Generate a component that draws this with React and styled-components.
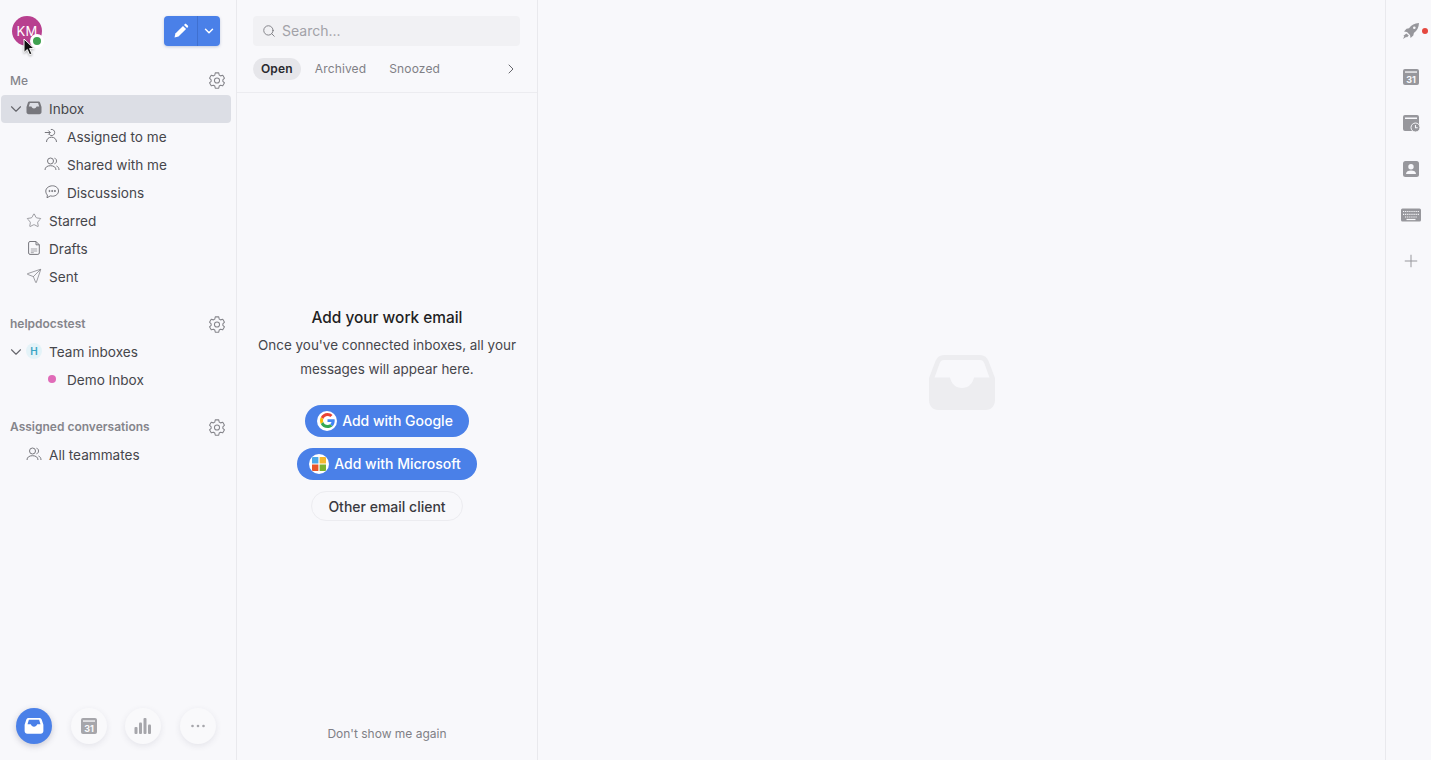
import React from "react";
import styled, { createGlobalStyle } from "styled-components";
import { ChevronDown, ChevronRight, Search, Star, Send, Plus } from "lucide-react";

const Global = createGlobalStyle`
  html, body { margin: 0; padding: 0; height: 100%; background: #f8f8fb; }
  #root { height: 100%; }
  * { box-sizing: border-box; }
  body { font-family: Inter, "Liberation Sans", sans-serif; color: #3a3a3f; overflow: hidden; }
`;

const Page = styled.div`
  display: flex; width: 1431px; height: 760px; position: relative; background: #f8f8fb;
`;
const Sidebar = styled.aside`
  width: 237px; flex: none; border-right: 1px solid #e9e9ed; display: flex; flex-direction: column; height: 100%;
`;
const TopBar = styled.div`
  height: 66px; flex: none; display: flex; align-items: flex-start; justify-content: space-between;
  padding: 16px 16px 0 12px;
`;
const Avatar = styled.div`
  width: 30px; height: 30px; border-radius: 50%; background: #b8408f; color: #fff; font-size: 13px; font-weight: 400;
  display: flex; align-items: center; justify-content: center; position: relative; letter-spacing: .2px;
`;
const Status = styled.span`
  position: absolute; left: 18px; top: 18px; width: 14px; height: 14px; border-radius: 50%;
  background: #3fa14f; border: 3px solid #fff;
`;
const Compose = styled.div`
  display: flex; width: 56px; height: 30px; border-radius: 4px; overflow: hidden; background: #4a80e8;
  box-shadow: 0 1px 3px rgba(40,70,140,.25);
`;
const ComposeMain = styled.div`
  width: 34px; display: flex; align-items: center; justify-content: center; border-right: 1px solid #3f70d0;
`;
const ComposeCaret = styled.div`
  flex: 1; display: flex; align-items: center; justify-content: center; color: #fff;
`;
const SectionHead = styled.div`
  height: 28px; display: flex; align-items: center; justify-content: space-between; padding: 0 10px 0 10px;
  margin-top: ${p => p.$gap || 0}px; margin-bottom: ${p => p.$after || 0}px;
  font-size: 12px; font-weight: ${p => p.$bold ? 600 : 500}; color: #85858b;
`;
const HeadLabel = styled.span`
  margin-top: ${p => p.$raise ? -2 : 0}px;
`;
const Row = styled.div`
  height: 28px; margin: 0 5px 0 1px; display: flex; align-items: center; position: relative; border-radius: 4px;
  padding-left: ${p => p.$depth ? 66 : 48}px; padding-bottom: 1px; font-size: 13.6px; color: #46464b;
  background: ${p => p.$active ? "#dcdee5" : "transparent"};
`;
const RowIcon = styled.span`
  position: absolute; left: ${p => p.$depth ? 43 : 25}px; top: 5px; width: 16px; height: 16px;
  display: flex; align-items: center; justify-content: center; color: #6f6f75;
`;
const Caret = styled.span`
  position: absolute; left: 6px; top: 5px; display: flex; color: #66666c;
`;
const HBadge = styled.span`
  width: 16px; height: 16px; border-radius: 50%; background: #e4f3f8; color: #38a4c4; font-size: 10px; font-weight: 600;
  display: flex; align-items: center; justify-content: center;
`;
const Dot = styled.span`
  width: 8px; height: 8px; border-radius: 50%; background: #e06bb8;
`;
const Spacer = styled.div`flex: 1;`;
const BottomNav = styled.nav`
  display: flex; gap: 18.5px; padding: 0 0 16px 16px;
`;
const Round = styled.div`
  width: 36px; height: 36px; border-radius: 50%; display: flex; align-items: center; justify-content: center;
  background: ${p => p.$on ? "#4a80e8" : "#f9f9fb"};
  box-shadow: 0 2px 6px rgba(60,60,90,${p => p.$on ? ".25" : ".1"});
`;
const ListPanel = styled.section`
  width: 301px; flex: none; border-right: 1px solid #e9e9ed; display: flex; flex-direction: column; height: 100%;
`;
const PanelHead = styled.div`
  height: 93px; flex: none; border-bottom: 1px solid #ececf0; padding: 16px 17px 0 16px;
`;
const SearchBox = styled.div`
  height: 30px; width: 267px; background: #f1f1f4; border-radius: 4px; display: flex; align-items: center; gap: 6px;
  padding: 0 0 1px 9px; font-size: 14px; color: #a2a2a8;
`;
const Tabs = styled.div`
  display: flex; align-items: center; margin-top: 12px; height: 22px; font-size: 12px; letter-spacing: .15px;
`;
const Tab = styled.span`
  padding: 0 8px 1px; height: 22px; display: inline-flex; align-items: center; border-radius: 11px;
  margin-right: ${p => p.$mr}px; color: ${p => p.$on ? "#2a2a2e" : "#808086"}; font-weight: ${p => p.$on ? 600 : 400};
  background: ${p => p.$on ? "#e6e6ea" : "transparent"};
`;
const TabArrow = styled.span`
  margin-left: auto; margin-right: 1px; display: flex; color: #66666c;
`;
const Empty = styled.div`
  flex: 1; display: flex; flex-direction: column; align-items: center; padding: 213px 16px 0;
`;
const Title = styled.h2`
  margin: 0; font-size: 15.4px; line-height: 24px; font-weight: 500; color: #1f1f23;
`;
const Body = styled.p`
  margin: 3px 0 24px; text-align: center; font-size: 13.45px; line-height: 24px; color: #46464b; white-space: nowrap;
`;
const Cta = styled.div`
  height: 32px; border-radius: 16px; background: #4a80e8; color: #fff; font-size: 14px; font-weight: 500;
  display: flex; align-items: center; gap: 5px; padding: 0 16px 1px 12px; margin-bottom: 11px;
`;
const LogoDisc = styled.span`
  width: 20px; height: 20px; border-radius: 50%; background: #fff; display: flex; align-items: center; justify-content: center;
`;
const Ghost = styled.div`
  width: 152px; height: 30px; border-radius: 15px; border: 1px solid #ececf0; color: #3a3a3f; font-size: 14px; font-weight: 500;
  display: flex; align-items: center; justify-content: center;
`;
const Foot = styled.div`
  height: 52px; text-align: center; font-size: 12px; color: #808086; padding-top: 18px;
`;
const Main = styled.main`
  flex: 1; display: flex; align-items: center; justify-content: center; padding-top: 4px;
`;
const Rail = styled.aside`
  width: 46px; flex: none; border-left: 1px solid #e9e9ed; display: flex; flex-direction: column; align-items: center;
  padding: 8px 0 0 4px;
`;
const RailItem = styled.div`
  height: 46px; width: 100%; display: flex; align-items: center; justify-content: center; position: relative;
`;
const RedDot = styled.span`
  position: absolute; left: 32px; top: 20px; width: 6px; height: 6px; border-radius: 50%; background: #e5483f;
`;
const CursorMark = styled.svg`
  position: absolute; left: 23px; top: 38px; filter: drop-shadow(0 1px 1px rgba(0,0,0,.3));
`;

const Gear = () => (
  <svg width="18" height="18" viewBox="0 0 24 24" fill="none" stroke="#85858b" strokeWidth="1.4" strokeLinejoin="round">
    <path d="M9.700 2.500h4.600l.7 3 1.700 1 3-.9 2.300 4-2.200 2.100v2l2.200 2.100-2.300 4-3-.9-1.700 1-.7 3H9.700l-.7-3-1.700-1-3 .9-2.300-4 2.200-2.100v-2L2 9.600l2.300-4 3 .9 1.700-1z" />
    <circle cx="12" cy="12.600" r="3.400" />
  </svg>
);
const InboxIcon = ({ size = 16, color = "#77777d", hole = "#dcdee5" }) => (
  <svg width={size} height={size} viewBox="0 0 16 16">
    <path d="M3.800 1.500h8.400c1 0 1.700.5 2 1.400l1.300 4V12c0 1.300-.9 2.200-2.200 2.200H2.700C1.400 14.200.5 13.300.5 12V6.900l1.300-4c.3-.9 1-1.400 2-1.400z" fill={color} />
    <path d="M3.900 3h8.200l1.100 3.500h-2.600c-.5 1.300-1.400 2-2.600 2s-2.100-.7-2.600-2H2.800z" fill={hole} />
  </svg>
);
const Assigned = () => (
  <svg width="16" height="16" viewBox="0 0 16 16" fill="none" stroke="#77777d" strokeWidth="1">
    <path d="M6.800 1.500a3.100 3.100 0 1 1 0 6 3.100 3.100 0 0 1-1.600-1.300" />
    <path d="M.8 4.500h5.500M4.300 2.500l2 2-2 2" />
    <path d="M2.500 14c0-3 2.200-4.800 5-4.800s5 1.800 5 4.800" />
  </svg>
);
const Users = () => (
  <svg width="16" height="16" viewBox="0 0 16 16" fill="none" stroke="#77777d" strokeWidth="1">
    <circle cx="6.500" cy="5" r="3" />
    <path d="M10.500 2.200c1.500.4 2 1.500 2 2.800s-.6 2.400-2 2.800" />
    <path d="M1 14c0-2.800 2.200-4.300 5.500-4.300S12 11.200 12 14" />
    <path d="M12.500 10c1.500.5 2.500 2 2.500 4" />
  </svg>
);
const Chat = () => (
  <svg width="16" height="16" viewBox="0 0 16 16" fill="none" stroke="#77777d" strokeWidth="1">
    <path d="M8.500 1.800c3.400 0 6 2.300 6 5.200s-2.600 5.200-6 5.200c-.8 0-1.500-.1-2.200-.3L3 13.800l.4-2.800C2.200 10 1.800 8.500 1.800 7c0-2.900 3.200-5.200 6.700-5.200z" />
    <circle cx="5.500" cy="7" r=".6" fill="#77777d" />
    <circle cx="8.200" cy="7" r=".6" fill="#77777d" />
    <circle cx="10.900" cy="7" r=".6" fill="#77777d" />
  </svg>
);
const Draft = () => (
  <svg width="16" height="16" viewBox="0 0 16 16" fill="none" stroke="#77777d" strokeWidth="1">
    <path d="M4 1.500h6l3.300 3.300v8.200c0 .8-.6 1.400-1.400 1.400H4c-.8 0-1.400-.6-1.400-1.400V2.900c0-.8.6-1.400 1.400-1.400z" />
    <path d="M10 1.500v3.300h3.300" />
    <path d="M4.800 9h6.400M4.800 11h6.400M4.800 12.700h3" stroke="#a5a5aa" />
  </svg>
);
const Pencil = () => (
  <svg width="16" height="16" viewBox="0 0 16 16" fill="#fff">
    <path d="M1.500 14.500l.9-4L10 2.900l3.100 3.100-7.600 7.600z" />
    <path d="M11 1.900l.7-.7c.5-.5 1.200-.5 1.700 0l1.400 1.400c.5.5.5 1.200 0 1.700l-.7.700z" />
  </svg>
);
const Calendar = ({ color = "#a6a6ab", inner = "#f9f9fb" }) => (
  <svg width="18" height="18" viewBox="0 0 18 18">
    <rect x="1" y="1" width="16" height="16" rx="2" fill={color} />
    <rect x="3" y="3.400" width="12" height="1.300" fill={inner} />
    <text x="9" y="14.500" textAnchor="middle" fontSize="9" fontWeight="700" fontFamily="Inter, sans-serif" fill={inner}>31</text>
  </svg>
);
const CalClock = () => (
  <svg width="18" height="18" viewBox="0 0 18 18">
    <path d="M3 1h12a2 2 0 0 1 2 2v8h-6v6H3a2 2 0 0 1-2-2V3a2 2 0 0 1 2-2z" fill="#97979c" />
    <rect x="3" y="3.500" width="12" height="1.500" fill="#f8f8fb" />
    <circle cx="13.500" cy="13.500" r="4.500" fill="#97979c" stroke="#f8f8fb" strokeWidth="1" />
    <path d="M13.500 11v2.700h2.200" fill="none" stroke="#f8f8fb" strokeWidth="1.100" />
  </svg>
);
const Contact = () => (
  <svg width="18" height="18" viewBox="0 0 18 18">
    <rect x="1" y="1" width="16" height="16" rx="2.500" fill="#97979c" />
    <circle cx="9" cy="6.800" r="2.700" fill="#f8f8fb" />
    <path d="M4 14c0-2.500 2.200-3.600 5-3.600s5 1.100 5 3.600z" fill="#f8f8fb" />
  </svg>
);
const Keyboard = () => (
  <svg width="20" height="14" viewBox="0 0 20 14">
    <rect x="0" y="0.500" width="20" height="13" rx="1.500" fill="#97979c" />
    <path d="M2 3.500h16M2 6.300h16" stroke="#f8f8fb" strokeWidth="1.200" strokeDasharray="1.200 .9" />
    <path d="M4 9h12" stroke="#f8f8fb" strokeWidth="1.200" strokeDasharray="1.200 .9" />
    <path d="M5.500 11.500h9" stroke="#f8f8fb" strokeWidth="1.200" />
  </svg>
);
const Rocket = () => (
  <svg width="18" height="18" viewBox="0 0 18 18" fill="#97979c">
    <path d="M17 1c-4.500.2-7.500 1.800-10 5.200L4.500 6.800 2 9.500l3 .6 3 3 .6 3 2.700-2.500.6-2.600C15.200 8.500 16.800 5.500 17 1z" />
    <path d="M4.300 11.500l-3 2.500 1 .3-1.300 2.700 3.500-2.200.3.800 2-2.200z" />
    <circle cx="12.300" cy="5.700" r="1.300" fill="#f8f8fb" />
  </svg>
);
const Bars = () => (
  <svg width="18" height="18" viewBox="0 0 18 18" fill="#a6a6ab">
    <rect x="0.500" y="10" width="3" height="7" rx="1" />
    <rect x="5" y="5.500" width="3" height="11.500" rx="1" />
    <rect x="9.500" y="1" width="3" height="16" rx="1" />
    <rect x="14" y="7.500" width="3" height="9.500" rx="1" />
  </svg>
);
const More = () => (
  <svg width="16" height="4" viewBox="0 0 16 4" fill="#a6a6ab">
    <circle cx="2.500" cy="2" r="1.300" /><circle cx="8" cy="2" r="1.300" /><circle cx="13.500" cy="2" r="1.300" />
  </svg>
);
const Google = () => (
  <svg width="15" height="15" viewBox="0 0 48 48">
    <path fill="#EA4335" d="M24 9.500c3.500 0 6.700 1.200 9.200 3.600l6.900-6.900C35.900 2.400 30.500 0 24 0 14.600 0 6.500 5.400 2.600 13.200l8 6.200C12.500 13.700 17.800 9.500 24 9.500z" />
    <path fill="#4285F4" d="M47 24.500c0-1.600-.1-3.100-.4-4.500H24v9h12.900c-.6 3-2.200 5.500-4.700 7.200l7.700 6c4.500-4.200 7.100-10.300 7.100-17.700z" />
    <path fill="#FBBC05" d="M10.500 28.600c-.5-1.400-.8-3-.8-4.600s.3-3.200.8-4.600l-8-6.200C.9 16.500 0 20.100 0 24s.9 7.500 2.600 10.800z" />
    <path fill="#34A853" d="M24 48c6.500 0 11.900-2.100 15.900-5.800l-7.700-6c-2.200 1.500-4.900 2.300-8.200 2.300-6.200 0-11.500-4.200-13.400-9.900l-8 6.200C6.500 42.600 14.600 48 24 48z" />
  </svg>
);
const Microsoft = () => (
  <svg width="14" height="14" viewBox="0 0 14 14">
    <path d="M1 0h5.400v6.400H0V1a1 1 0 0 1 1-1z" fill="#4aa8e8" />
    <path d="M7.600 0H13a1 1 0 0 1 1 1v5.400H7.600z" fill="#f5b82e" />
    <path d="M0 7.600h6.400V14H1a1 1 0 0 1-1-1z" fill="#e8562a" />
    <path d="M7.600 7.600H14V13a1 1 0 0 1-1 1H7.600z" fill="#7ab32f" />
  </svg>
);
const BigInbox = () => (
  <svg width="66" height="56" viewBox="0 0 66 56">
    <path d="M15 1h36c4 0 7 2 8.500 6L66 24v22c0 6-4 10-9 10H9c-5 0-9-4-9-10V24L6.500 7C8 3 11 1 15 1z" fill="#ededf0" />
    <path d="M15 6h36c2 0 3.500 1 4.200 3l5.300 14.500H45C43.500 30 39 34 33 34s-10.500-4-12-10.500H5.500L10.800 9C11.500 7 13 6 15 6z" fill="#f8f8fb" />
  </svg>
);
const Cursor = () => (
  <CursorMark width="13" height="18" viewBox="0 0 13 18">
    <path d="M1 1v13.500l3.300-3 2.300 5.300 2.300-1-2.300-5.200h4.500z" fill="#111" stroke="#fff" strokeWidth="1" />
  </CursorMark>
);

const chev = <ChevronDown size={18} strokeWidth={1.5} />;

export default function App() {
  return (
    <Page>
      <Global />
      <Sidebar>
        <TopBar>
          <Avatar>KM<Status /></Avatar>
          <Compose>
            <ComposeMain><Pencil /></ComposeMain>
            <ComposeCaret><ChevronDown size={14} strokeWidth={2.5} /></ComposeCaret>
          </Compose>
        </TopBar>
        <SectionHead $after={1}><HeadLabel>Me</HeadLabel><Gear /></SectionHead>
        <Row $active><Caret>{chev}</Caret><RowIcon><InboxIcon /></RowIcon>Inbox</Row>
        <Row $depth><RowIcon $depth><Assigned /></RowIcon>Assigned to me</Row>
        <Row $depth><RowIcon $depth><Users /></RowIcon>Shared with me</Row>
        <Row $depth><RowIcon $depth><Chat /></RowIcon>Discussions</Row>
        <Row><RowIcon><Star size={17} strokeWidth={1} /></RowIcon>Starred</Row>
        <Row><RowIcon><Draft /></RowIcon>Drafts</Row>
        <Row><RowIcon><Send size={16} strokeWidth={1} /></RowIcon>Sent</Row>
        <SectionHead $gap={19} $bold><HeadLabel $raise>helpdocstest</HeadLabel><Gear /></SectionHead>
        <Row><Caret>{chev}</Caret><RowIcon><HBadge>H</HBadge></RowIcon>Team inboxes</Row>
        <Row $depth><RowIcon $depth><Dot /></RowIcon>Demo Inbox</Row>
        <SectionHead $gap={19} $bold><HeadLabel $raise>Assigned conversations</HeadLabel><Gear /></SectionHead>
        <Row><RowIcon><Users /></RowIcon>All teammates</Row>
        <Spacer />
        <BottomNav>
          <Round $on><InboxIcon size={20} color="#fff" hole="#4a80e8" /></Round>
          <Round><Calendar /></Round>
          <Round><Bars /></Round>
          <Round><More /></Round>
        </BottomNav>
      </Sidebar>
      <ListPanel>
        <PanelHead>
          <SearchBox><Search size={14} color="#77777d" strokeWidth={1.5} />Search...</SearchBox>
          <Tabs>
            <Tab $on $mr={6}>Open</Tab>
            <Tab $mr={7}>Archived</Tab>
            <Tab $mr={0}>Snoozed</Tab>
            <TabArrow><ChevronRight size={16} strokeWidth={1.5} /></TabArrow>
          </Tabs>
        </PanelHead>
        <Empty>
          <Title>Add your work email</Title>
          <Body>Once you've connected inboxes, all your<br />messages will appear here.</Body>
          <Cta><LogoDisc><Google /></LogoDisc>Add with Google</Cta>
          <Cta><LogoDisc><Microsoft /></LogoDisc>Add with Microsoft</Cta>
          <Ghost>Other email client</Ghost>
        </Empty>
        <Foot>Don't show me again</Foot>
      </ListPanel>
      <Main><BigInbox /></Main>
      <Rail>
        <RailItem><Rocket /><RedDot /></RailItem>
        <RailItem><Calendar color="#97979c" inner="#f8f8fb" /></RailItem>
        <RailItem><CalClock /></RailItem>
        <RailItem><Contact /></RailItem>
        <RailItem><Keyboard /></RailItem>
        <RailItem><Plus size={20} color="#97979c" strokeWidth={1.2} /></RailItem>
      </Rail>
      <Cursor />
    </Page>
  );
}
